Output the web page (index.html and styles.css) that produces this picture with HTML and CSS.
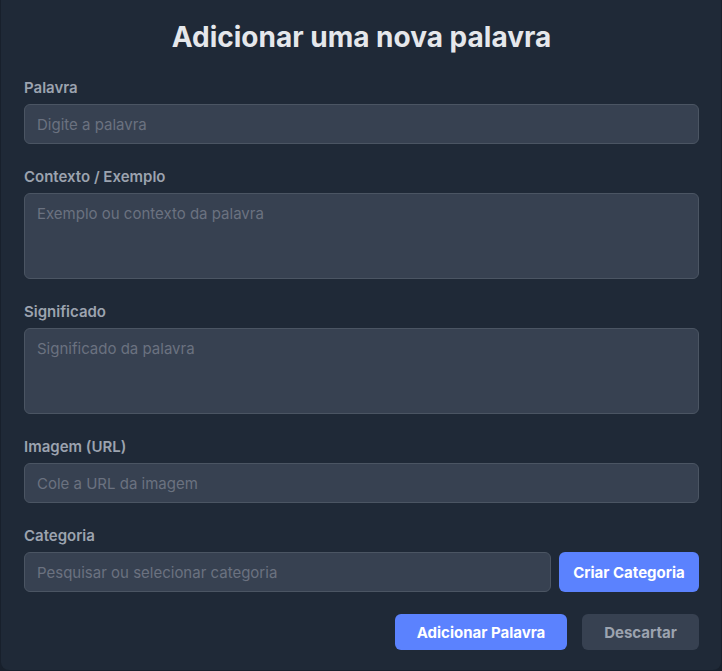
FILE: index.html
```html
<!DOCTYPE html>
<html lang="pt">
<head>
<meta charset="utf-8">
<title>Adicionar uma nova palavra</title>
<link rel="stylesheet" href="styles.css">
</head>
<body>
<div class="card">
  <h1 class="title">Adicionar uma nova palavra</h1>
  <form class="form">
    <div class="group">
      <label class="label">Palavra</label>
      <input class="field" type="text" placeholder="Digite a palavra">
    </div>
    <div class="group">
      <label class="label">Contexto / Exemplo</label>
      <textarea class="field area" placeholder="Exemplo ou contexto da palavra"></textarea>
    </div>
    <div class="group">
      <label class="label">Significado</label>
      <textarea class="field area" placeholder="Significado da palavra"></textarea>
    </div>
    <div class="group">
      <label class="label">Imagem (URL)</label>
      <input class="field" type="text" placeholder="Cole a URL da imagem">
    </div>
    <div class="group">
      <label class="label">Categoria</label>
      <div class="row">
        <input class="field grow" type="text" placeholder="Pesquisar ou selecionar categoria">
        <button type="button" class="btn primary create">Criar Categoria</button>
      </div>
    </div>
    <div class="actions">
      <button type="button" class="btn primary add">Adicionar Palavra</button>
      <button type="button" class="btn secondary discard">Descartar</button>
    </div>
  </form>
</div>
</body>
</html>
```
FILE: styles.css
```css
* { box-sizing: border-box; }
html, body { margin: 0; padding: 0; }
body {
  background: #18202c;
  font-family: Inter, "Noto Sans", sans-serif;
  width: 722px;
  height: 671px;
  overflow: hidden;
}
.card {
  margin: 0 1px;
  height: 670px;
  background: #1f2937;
  border-radius: 0 0 8px 8px;
  padding: 19px 22px 0 23px;
}
.title {
  margin: 0 0 22px;
  text-align: center;
  color: #e5e7eb;
  font-size: 28px;
  line-height: 36px;
  font-weight: 700;
}
.form {
  display: flex;
  flex-direction: column;
  gap: 22px;
}
.group {
  display: flex;
  flex-direction: column;
}
.label {
  color: #9ca3af;
  font-size: 15px;
  line-height: 21px;
  font-weight: 600;
  margin-bottom: 6px;
}
.field {
  display: block;
  width: 100%;
  height: 40px;
  background: #374151;
  border: 1px solid #4b5563;
  border-radius: 6px;
  padding: 0 12px;
  color: #e5e7eb;
  font-family: Inter, "Noto Sans", sans-serif;
  font-size: 15px;
  outline: none;
}
.field::placeholder { color: #6b7280; }
.area {
  height: 86px;
  padding: 10px 12px;
  line-height: 20px;
  resize: none;
}
.row {
  display: flex;
  gap: 8px;
}
.grow { flex: 1; width: auto; }
.btn {
  border: none;
  border-radius: 6px;
  font-family: Inter, "Noto Sans", sans-serif;
  font-size: 15px;
  font-weight: 700;
  cursor: pointer;
}
.primary { background: #5b82fe; color: #ffffff; }
.secondary { background: #374151; color: #9ca3af; }
.create { width: 140px; height: 40px; flex: none; }
.actions {
  display: flex;
  justify-content: flex-end;
  gap: 15px;
}
.add { width: 172px; height: 36px; }
.discard { width: 117px; height: 36px; }
```
